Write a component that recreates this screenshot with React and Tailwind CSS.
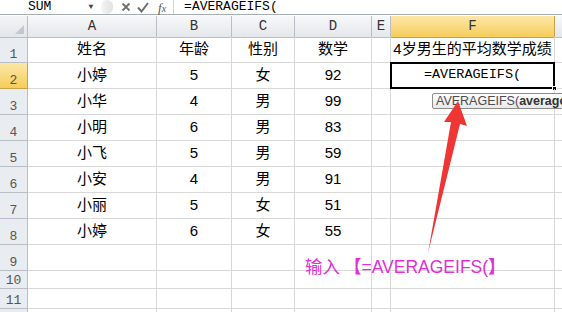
import React from 'react';

const rows = [
  ['姓名', '年龄', '性别', '数学', '', '4岁男生的平均数学成绩'],
  ['小婷', '5', '女', '92', '', ''],
  ['小华', '4', '男', '99', '', ''],
  ['小明', '6', '男', '83', '', ''],
  ['小飞', '5', '男', '59', '', ''],
  ['小安', '4', '男', '91', '', ''],
  ['小丽', '5', '女', '51', '', ''],
  ['小婷', '6', '女', '55', '', ''],
  ['', '', '', '', '', ''],
  ['', '', '', '', '', ''],
  ['', '', '', '', '', ''],
  ['', '', '', '', '', ''],
];

const rowHeights = ['h-[26px]', 'h-[26px]', 'h-[26px]', 'h-[26px]', 'h-[26px]', 'h-[26px]', 'h-[26px]', 'h-[26px]', 'h-[26px]', 'h-[18px]', 'h-[20px]', 'h-[20px]'];

const cols = ['A', 'B', 'C', 'D', 'E', 'F'];
const gridCols = 'grid grid-cols-[28px_129px_75px_63px_77px_19px_164px_1fr]';
const cellFont = { fontFamily: '"Liberation Sans", "Noto Sans CJK SC", sans-serif' };
const monoFont = { fontFamily: '"Liberation Mono", "DejaVu Sans Mono", monospace' };

function FormulaBar() {
  return (
    <div className="flex h-[15px] items-center border-b border-[#a5acb5] bg-white">
      <div className="flex w-[98px] items-center pl-[28px] text-[13px] leading-none text-black" style={monoFont}>
        <span className="-mt-[2px]">SUM</span>
        <span className="ml-[37px] text-[8px] text-[#444]">▼</span>
      </div>
      <div className="ml-[3px] h-[14px] w-[12px] rounded-full bg-gradient-to-r from-[#f4f4f4] to-[#e2e2e2]" />
      <div className="ml-[8px] flex items-center gap-[6px]">
        <svg width="10" height="10" viewBox="0 0 10 10">
          <path d="M1.5 1.5 L8.5 8.5 M8.5 1.5 L1.5 8.5" stroke="#6f6f6f" strokeWidth="1.8" />
        </svg>
        <svg width="12" height="11" viewBox="0 0 12 11">
          <path d="M1 5.5 L4.5 9.5 L11 1" stroke="#6f6f6f" strokeWidth="2" fill="none" />
        </svg>
        <span className="ml-[3px] text-[13px] italic leading-none text-[#555]" style={{ fontFamily: '"Liberation Serif", serif' }}>
          f<span className="text-[10px]">x</span>
        </span>
      </div>
      <div className="ml-[7px] h-full w-px bg-[#d4d4d4]" />
      <div className="ml-[10px] -mt-[2px] text-[13px] leading-none text-black" style={monoFont}>
        =AVERAGEIFS(
      </div>
    </div>
  );
}

function ColumnHeader() {
  return (
    <div className={`${gridCols} mt-[1px] h-[21px]`}>
      <div className="relative border-r border-b border-[#b9bec6] bg-gradient-to-b from-[#f3f4f6] to-[#e3e6ea]">
        <svg className="absolute right-[3px] bottom-[3px]" width="9" height="9" viewBox="0 0 9 9">
          <polygon points="9,0 9,9 0,9" fill="#c4c8ce" />
        </svg>
      </div>
      {cols.map((c) => (
        <div
          key={c}
          className={
            c === 'F'
              ? 'flex items-center justify-center border-r border-b border-[#c9a24a] bg-gradient-to-b from-[#fde7a6] to-[#f6cd58] text-[14px] text-[#333]'
              : 'flex items-center justify-center border-r border-b border-[#b9bec6] bg-gradient-to-b from-[#f7f8f9] to-[#e4e7eb] text-[14px] text-[#333]'
          }
          style={monoFont}
        >
          {c}
        </div>
      ))}
      <div className="border-b border-[#b9bec6] bg-gradient-to-b from-[#f7f8f9] to-[#e4e7eb]" />
    </div>
  );
}

function Row({ data, index }) {
  const active = index === 1;
  return (
    <div className={`${gridCols} ${rowHeights[index]}`}>
      <div
        className={
          active
            ? 'flex items-end justify-center border-r border-b border-[#c9a24a] bg-gradient-to-b from-[#fde7a6] to-[#f6cd58] pb-[1px] text-[13px] leading-none text-[#555]'
            : 'flex items-end justify-center border-r border-b border-[#b9bec6] bg-[#e9ecf0] pb-[1px] text-[13px] leading-none text-[#555]'
        }
        style={monoFont}
      >
        {index < 11 ? index + 1 : ''}
      </div>
      {data.map((v, i) => (
        <div
          key={i}
          className="relative flex items-center justify-center border-r border-b border-[#d8d8d8] text-[15px] text-black"
          style={i === 5 && active ? monoFont : cellFont}
        >
          {i === 5 && active ? (
            <>
              <span className="text-[13.5px]">=AVERAGEIFS(</span>
              <div className="absolute -top-[1px] -left-[1px] -right-[1px] -bottom-[1px] border-2 border-black" />
              <div className="absolute -right-[3px] -bottom-[3px] h-[5px] w-[5px] border border-white bg-black" />
              <div
                className="absolute left-[41px] top-[30px] z-10 flex h-[16px] w-[140px] items-center whitespace-nowrap rounded-[2px] border border-[#8c8c8c] bg-gradient-to-b from-[#fdfdfd] to-[#e8e8ea] pl-[3px] text-[12.5px] leading-none text-[#4c4c4c]"
                style={{ fontFamily: '"Liberation Sans", sans-serif' }}
              >
                AVERAGEIFS(<b className="text-[#333]">average</b>
              </div>
            </>
          ) : (
            v
          )}
        </div>
      ))}
      <div className="border-b border-[#d8d8d8]" />
    </div>
  );
}

export default function App() {
  return (
    <div className="relative h-[312px] w-[562px] overflow-hidden bg-white">
      <FormulaBar />
      <ColumnHeader />
      {rows.map((r, i) => (
        <Row key={i} data={r} index={i} />
      ))}

      {/* red arrow */}
      <svg className="pointer-events-none absolute left-0 top-0 z-20" width="562" height="312" viewBox="0 0 562 312">
        <polygon points="458,101 467,126 460,124 428,253 451,122 444,122" fill="#f03535" />
      </svg>

      {/* annotation */}
      <div
        className="absolute left-[305px] top-[254px] z-20 whitespace-nowrap text-[17.5px] text-[#e02fd4]"
        style={{ fontFamily: '"Liberation Sans", "Noto Sans CJK SC", sans-serif' }}
      >
        输入<b className="ml-[4px]">【</b>=AVERAGEIFS(<b>】</b>
      </div>
    </div>
  );
}
